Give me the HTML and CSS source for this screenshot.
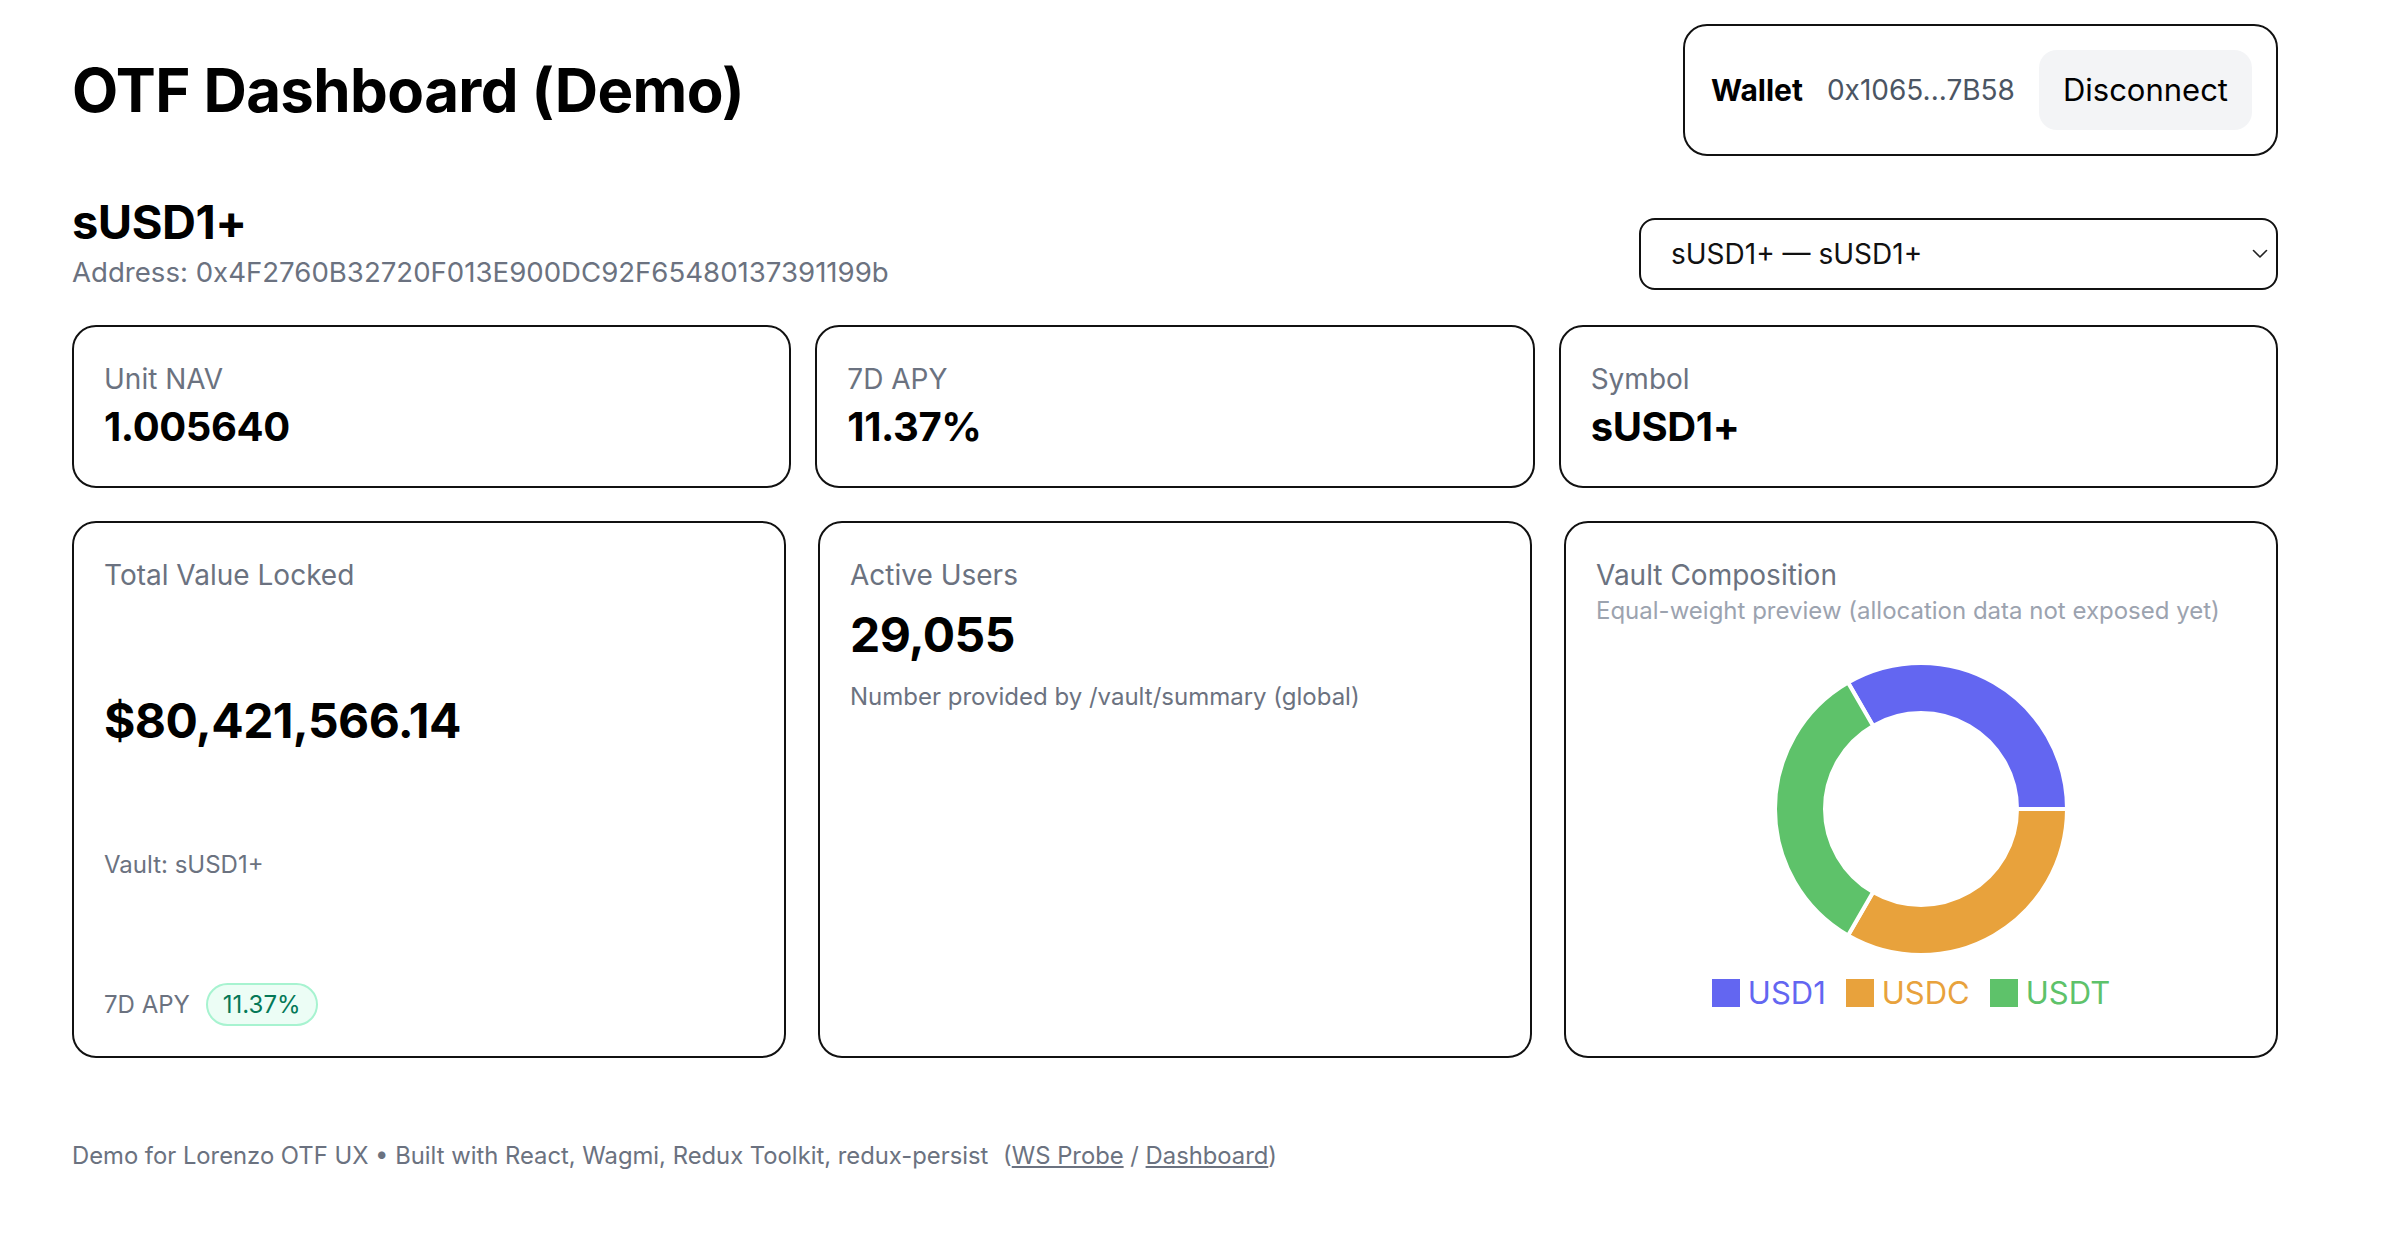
FILE: index.html
```html
<!DOCTYPE html>
<html lang="en">
<head>
<meta charset="utf-8">
<title>OTF Dashboard (Demo)</title>
<link rel="stylesheet" href="styles.css">
</head>
<body>
<div class="page">
  <header class="topbar">
    <h1 class="title">OTF Dashboard (Demo)</h1>
    <div class="wallet">
      <span class="wallet-label">Wallet</span>
      <span class="wallet-addr">0x1065...7B58</span>
      <button class="btn">Disconnect</button>
    </div>
  </header>

  <section class="vault-row">
    <div class="vault-info">
      <h2 class="vault-name">sUSD1+</h2>
      <div class="vault-addr">Address: 0x4F2760B32720F013E900DC92F65480137391199b</div>
    </div>
    <div class="select-wrap">
      <select class="select">
        <option>sUSD1+ — sUSD1+</option>
      </select>
      <svg class="chev" width="16" height="10" viewBox="0 0 16 10"><path d="M1.5 1.5 L8 8 L14.5 1.5" fill="none" stroke="#222" stroke-width="1.6" stroke-linecap="round" stroke-linejoin="round"/></svg>
    </div>
  </section>

  <section class="stats">
    <div class="card stat">
      <div class="label">Unit NAV</div>
      <div class="stat-value">1.005640</div>
    </div>
    <div class="card stat">
      <div class="label">7D APY</div>
      <div class="stat-value">11.37%</div>
    </div>
    <div class="card stat">
      <div class="label">Symbol</div>
      <div class="stat-value">sUSD1+</div>
    </div>
  </section>

  <section class="panels">
    <div class="card panel tvl">
      <div class="label">Total Value Locked</div>
      <div class="big-value">$80,421,566.14</div>
      <div class="small muted">Vault: sUSD1+</div>
      <div class="apy-row">
        <span class="small muted">7D APY</span>
        <span class="badge">11.37%</span>
      </div>
    </div>
    <div class="card panel">
      <div class="label">Active Users</div>
      <div class="big-value users">29,055</div>
      <div class="small muted note">Number provided by /vault/summary (global)</div>
    </div>
    <div class="card panel comp">
      <div class="label">Vault Composition</div>
      <div class="subtle">Equal-weight preview (allocation data not exposed yet)</div>
      <div class="chart">
        <svg class="donut" width="300" height="300" viewBox="0 0 300 300">
          <path d="M77 23.56 A146 146 0 0 1 296 150 L246 150 A96 96 0 0 0 102 66.86 Z" fill="#6366f1" stroke="#fff" stroke-width="4"/>
          <path d="M296 150 A146 146 0 0 1 77 276.44 L102 233.14 A96 96 0 0 0 246 150 Z" fill="#e8a23c" stroke="#fff" stroke-width="4"/>
          <path d="M77 276.44 A146 146 0 0 1 77 23.56 L102 66.86 A96 96 0 0 0 102 233.14 Z" fill="#5ec26a" stroke="#fff" stroke-width="4"/>
        </svg>
        <ul class="legend">
          <li class="leg leg-blue"><span class="sw"></span>USD1</li>
          <li class="leg leg-orange"><span class="sw"></span>USDC</li>
          <li class="leg leg-green"><span class="sw"></span>USDT</li>
        </ul>
      </div>
    </div>
  </section>

  <footer class="footer">
    Demo for Lorenzo OTF UX • Built with React, Wagmi, Redux Toolkit, redux-persist <span class="links">(<a href="#">WS Probe</a> / <a href="#">Dashboard</a>)</span>
  </footer>
</div>
</body>
</html>
```

FILE: styles.css
```css
* { box-sizing: border-box; }

html, body {
  margin: 0;
  padding: 0;
  background: #fff;
}

body {
  font-family: "Inter", "Noto Sans", "Liberation Sans", sans-serif;
  color: #000;
}

.page {
  width: 2206px;
  margin-left: 72px;
  padding-top: 24px;
}

.topbar {
  display: flex;
  justify-content: space-between;
  align-items: center;
  margin-bottom: 38px;
}

.title {
  margin: 0;
  font-size: 60px;
  line-height: 72px;
  font-weight: 700;
  letter-spacing: -0.6px;
}

.wallet {
  display: flex;
  align-items: center;
  gap: 24px;
  padding: 24px 24px 24px 26px;
  border: 2px solid #111;
  border-radius: 24px;
}

.wallet-label {
  font-size: 30px;
  font-weight: 700;
}

.wallet-addr {
  font-size: 28px;
  color: #4b5563;
}

.btn {
  font-family: inherit;
  font-size: 31px;
  line-height: 48px;
  padding: 16px 24px;
  border: none;
  border-radius: 18px;
  background: #f3f4f6;
  color: #000;
}

.vault-row {
  display: flex;
  justify-content: space-between;
  align-items: flex-end;
  margin-bottom: 31px;
}

.vault-name {
  margin: 0;
  font-size: 47px;
  line-height: 56px;
  font-weight: 700;
  letter-spacing: -0.5px;
}

.vault-addr {
  font-size: 27.6px;
  line-height: 44px;
  color: #6b7280;
}

.select-wrap {
  position: relative;
  width: 639px;
  margin-bottom: 4px;
}

.select {
  appearance: none;
  -webkit-appearance: none;
  display: block;
  width: 100%;
  height: 72px;
  padding: 0 30px;
  font-family: inherit;
  font-size: 28px;
  color: #111;
  background: #fff;
  border: 2px solid #111;
  border-radius: 16px;
}

.chev {
  position: absolute;
  right: 10px;
  top: 31px;
  pointer-events: none;
}

.stats {
  display: grid;
  grid-template-columns: repeat(3, 1fr);
  gap: 24px;
  margin-bottom: 33px;
}

.card {
  border: 2px solid #111;
  border-radius: 24px;
  background: #fff;
}

.stat {
  padding: 32px 30px 35px;
}

.label {
  font-size: 28px;
  line-height: 40px;
  color: #6b7280;
}

.stat-value {
  margin-top: 4px;
  font-size: 40px;
  line-height: 48px;
  font-weight: 700;
  letter-spacing: -0.4px;
}

.panels {
  display: grid;
  grid-template-columns: repeat(3, 1fr);
  gap: 32px;
}

.panel {
  padding: 32px 30px 43px;
}

.tvl {
  display: flex;
  flex-direction: column;
  justify-content: space-between;
  padding-bottom: 30px;
}

.big-value {
  font-size: 48px;
  line-height: 52px;
  font-weight: 700;
  letter-spacing: -0.6px;
}

.users {
  margin-top: 14px;
}

.small {
  font-size: 24px;
  line-height: 36px;
}

.muted {
  color: #6b7280;
}

.note {
  margin-top: 18px;
}

.apy-row {
  display: flex;
  align-items: center;
  gap: 16px;
}

.badge {
  font-size: 24px;
  line-height: 36px;
  padding: 1.5px 15px;
  border: 2px solid #a7f3d0;
  border-radius: 999px;
  background: #ecfdf5;
  color: #047857;
}

.subtle {
  font-size: 24px;
  line-height: 32px;
  color: #9ca3af;
}

.chart {
  display: flex;
  flex-direction: column;
  align-items: center;
  margin-top: 32px;
}

.donut {
  display: block;
}

.legend {
  list-style: none;
  margin: 14px 0 0;
  padding: 0;
  display: flex;
  align-items: center;
  font-size: 31px;
  line-height: 40px;
}

.leg {
  display: flex;
  align-items: center;
  margin-right: 20px;
}

.sw {
  width: 28px;
  height: 28px;
  margin-right: 8px;
}

.leg-blue { color: #6366f1; }
.leg-blue .sw { background: #6366f1; }
.leg-orange { color: #e8a23c; }
.leg-orange .sw { background: #e8a23c; }
.leg-green { color: #5ec26a; }
.leg-green .sw { background: #5ec26a; }

.footer {
  margin-top: 80px;
  font-size: 23.8px;
  line-height: 36px;
  color: #6b7280;
}

.links {
  margin-left: 8px;
}

.links a {
  color: #6b7280;
  text-decoration: underline;
}
```
